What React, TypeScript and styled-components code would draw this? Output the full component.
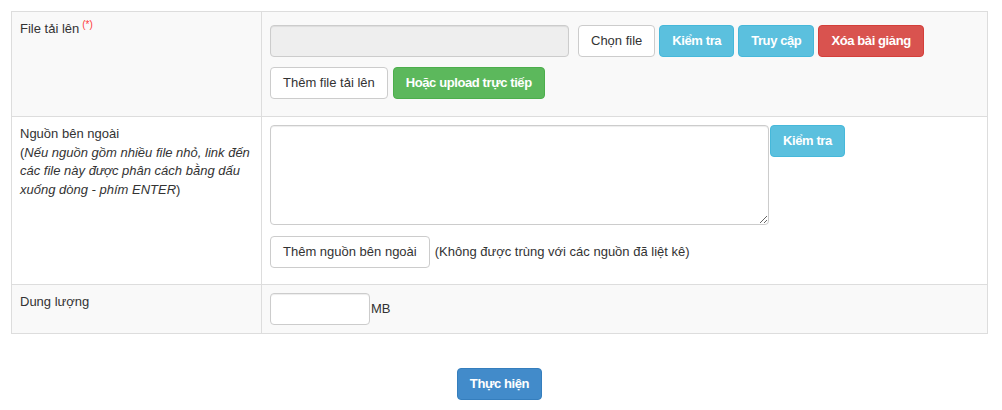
import React from "react";
import styled, { createGlobalStyle } from "styled-components";

const Global = createGlobalStyle`
  html, body { margin: 0; padding: 0; background: #fff; }
  body {
    font-family: "Liberation Sans", Arial, Helvetica, sans-serif;
    font-size: 13px;
    line-height: 1.42857;
    color: #333;
  }
  * { box-sizing: border-box; }
`;

const Page = styled.div`
  padding: 11px 14px 0 11px;
`;

const Table = styled.div`
  display: grid;
  grid-template-columns: 250px 1fr;
  border-top: 1px solid #ddd;
  border-left: 1px solid #ddd;
`;

const Cell = styled.div<{ $striped?: boolean }>`
  padding: 8px;
  border-right: 1px solid #ddd;
  border-bottom: 1px solid #ddd;
  background: ${(p) => (p.$striped ? "#f9f9f9" : "#fff")};
  min-width: 0;
`;

const Label = styled(Cell)`
  padding-left: 8px;
`;

const Required = styled.sup`
  color: #ff3b3b;
  font-size: 10px;
  margin-left: 3px;
  vertical-align: 5px;
  line-height: 0;
`;

const Line = styled.div<{ $mt?: number; $mb?: number; $gap?: number }>`
  display: flex;
  align-items: center;
  flex-wrap: nowrap;
  gap: ${(p) => p.$gap ?? 4}px;
  margin-top: ${(p) => p.$mt ?? 0}px;
  margin-bottom: ${(p) => p.$mb ?? 0}px;
`;

const TopLine = styled(Line)`
  align-items: flex-start;
`;

const TextInput = styled.input<{ $w: number }>`
  width: ${(p) => p.$w}px;
  height: 32px;
  padding: 6px 12px;
  font: inherit;
  color: #555;
  border: 1px solid #ccc;
  border-radius: 4px;
  background: #fff;
  box-shadow: inset 0 1px 1px rgba(0, 0, 0, 0.075);
  &:disabled {
    background: #eee;
  }
`;

const TextArea = styled.textarea`
  width: 499px;
  height: 100px;
  padding: 6px 12px;
  font: inherit;
  border: 1px solid #ccc;
  border-radius: 4px;
  box-shadow: inset 0 1px 1px rgba(0, 0, 0, 0.075);
  resize: both;
  margin: 0;
  display: block;
`;

type Variant = "default" | "info" | "danger" | "success" | "primary";

const colors: Record<Variant, { bg: string; border: string; fg: string }> = {
  default: { bg: "#fff", border: "#ccc", fg: "#333" },
  info: { bg: "#5bc0de", border: "#46b8da", fg: "#fff" },
  danger: { bg: "#d9534f", border: "#d43f3a", fg: "#fff" },
  success: { bg: "#5cb85c", border: "#4cae4c", fg: "#fff" },
  primary: { bg: "#428bca", border: "#357ebd", fg: "#fff" },
};

const Button = styled.button<{ $v?: Variant; $ml?: number }>`
  display: inline-block;
  flex: none;
  height: 32px;
  padding: 6px 12px;
  margin: 0 0 0 ${(p) => p.$ml ?? 0}px;
  font-family: inherit;
  font-size: 13px;
  line-height: 1.42857;
  font-weight: ${(p) => (p.$v && p.$v !== "default" ? "bold" : "normal")};
  letter-spacing: ${(p) => (p.$v && p.$v !== "default" ? "-0.4px" : "0")};
  color: ${(p) => colors[p.$v ?? "default"].fg};
  background: ${(p) => colors[p.$v ?? "default"].bg};
  border: 1px solid ${(p) => colors[p.$v ?? "default"].border};
  border-radius: 4px;
  white-space: nowrap;
  cursor: pointer;
`;

const Note = styled.span`
  margin-left: 1px;
  white-space: nowrap;
`;

const Unit = styled.span`
  margin-left: 1px;
`;

const Footer = styled.div`
  display: flex;
  justify-content: center;
  padding-top: 34px;
`;

export default function App() {
  return (
    <Page>
      <Global />
      <Table>
        <Label $striped>
          File tải lên<Required>(*)</Required>
        </Label>
        <Cell $striped>
          <Line $mt={5}>
            <TextInput $w={299} disabled />
            <Button $ml={5}>Chọn file</Button>
            <Button $v="info">Kiểm tra</Button>
            <Button $v="info">Truy cập</Button>
            <Button $v="danger">Xóa bài giảng</Button>
          </Line>
          <Line $mt={10} $mb={9} $gap={5}>
            <Button>Thêm file tải lên</Button>
            <Button $v="success">Hoặc upload trực tiếp</Button>
          </Line>
        </Cell>

        <Label>
          Nguồn bên ngoài
          <br />(
          <i>
            Nếu nguồn gồm nhiều file nhỏ, link đến các file này được phân cách
            bằng dấu xuống dòng - phím ENTER
          </i>
          )
        </Label>
        <Cell>
          <TopLine $gap={1}>
            <TextArea />
            <Button $v="info">Kiểm tra</Button>
          </TopLine>
          <Line $mt={11} $mb={8}>
            <Button>Thêm nguồn bên ngoài</Button>
            <Note>(Không được trùng với các nguồn đã liệt kê)</Note>
          </Line>
        </Cell>

        <Label $striped>Dung lượng</Label>
        <Cell $striped>
          <Line $gap={0}>
            <TextInput $w={100} />
            <Unit>MB</Unit>
          </Line>
        </Cell>
      </Table>
      <Footer>
        <Button $v="primary">Thực hiện</Button>
      </Footer>
    </Page>
  );
}
